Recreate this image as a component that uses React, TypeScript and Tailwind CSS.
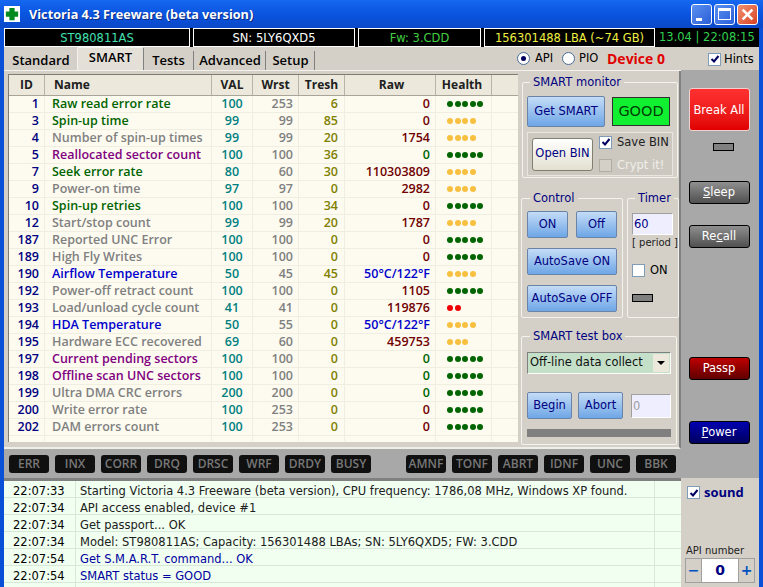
import type { ReactNode } from "react";

type Row = {
  id: number;
  name: string;
  tone: string;
  val: number;
  wrst: number;
  tresh: number;
  raw: string;
  rawTone: string;
  dots: number;
  dotTone: string;
};

const GREEN = "text-[#006400]";
const PURPLE = "text-[#800080]";
const BLUE = "text-[#0000cd]";
const GRAY = "text-[#808080]";
const MAROON = "text-[#700000]";
const OK = "bg-[#006400]";
const WARN = "bg-[#f8c040]";
const BAD = "bg-[#f00000]";

const rows: Row[] = [
  { id: 1, name: "Raw read error rate", tone: GREEN, val: 100, wrst: 253, tresh: 6, raw: "0", rawTone: MAROON, dots: 5, dotTone: OK },
  { id: 3, name: "Spin-up time", tone: GREEN, val: 99, wrst: 99, tresh: 85, raw: "0", rawTone: MAROON, dots: 4, dotTone: WARN },
  { id: 4, name: "Number of spin-up times", tone: GRAY, val: 99, wrst: 99, tresh: 20, raw: "1754", rawTone: MAROON, dots: 4, dotTone: WARN },
  { id: 5, name: "Reallocated sector count", tone: PURPLE, val: 100, wrst: 100, tresh: 36, raw: "0", rawTone: GREEN, dots: 5, dotTone: OK },
  { id: 7, name: "Seek error rate", tone: GREEN, val: 80, wrst: 60, tresh: 30, raw: "110303809", rawTone: MAROON, dots: 4, dotTone: WARN },
  { id: 9, name: "Power-on time", tone: GRAY, val: 97, wrst: 97, tresh: 0, raw: "2982", rawTone: MAROON, dots: 4, dotTone: WARN },
  { id: 10, name: "Spin-up retries", tone: GREEN, val: 100, wrst: 100, tresh: 34, raw: "0", rawTone: MAROON, dots: 5, dotTone: OK },
  { id: 12, name: "Start/stop count", tone: GRAY, val: 99, wrst: 99, tresh: 20, raw: "1787", rawTone: MAROON, dots: 4, dotTone: WARN },
  { id: 187, name: "Reported UNC Error", tone: GRAY, val: 100, wrst: 100, tresh: 0, raw: "0", rawTone: MAROON, dots: 5, dotTone: OK },
  { id: 189, name: "High Fly Writes", tone: GRAY, val: 100, wrst: 100, tresh: 0, raw: "0", rawTone: MAROON, dots: 5, dotTone: OK },
  { id: 190, name: "Airflow Temperature", tone: BLUE, val: 50, wrst: 45, tresh: 45, raw: "50°C/122°F", rawTone: BLUE, dots: 4, dotTone: WARN },
  { id: 192, name: "Power-off retract count", tone: GRAY, val: 100, wrst: 100, tresh: 0, raw: "1105", rawTone: MAROON, dots: 5, dotTone: OK },
  { id: 193, name: "Load/unload cycle count", tone: GRAY, val: 41, wrst: 41, tresh: 0, raw: "119876", rawTone: MAROON, dots: 2, dotTone: BAD },
  { id: 194, name: "HDA Temperature", tone: BLUE, val: 50, wrst: 55, tresh: 0, raw: "50°C/122°F", rawTone: BLUE, dots: 4, dotTone: WARN },
  { id: 195, name: "Hardware ECC recovered", tone: GRAY, val: 69, wrst: 60, tresh: 0, raw: "459753", rawTone: MAROON, dots: 3, dotTone: WARN },
  { id: 197, name: "Current pending sectors", tone: PURPLE, val: 100, wrst: 100, tresh: 0, raw: "0", rawTone: GREEN, dots: 5, dotTone: OK },
  { id: 198, name: "Offline scan UNC sectors", tone: PURPLE, val: 100, wrst: 100, tresh: 0, raw: "0", rawTone: GREEN, dots: 5, dotTone: OK },
  { id: 199, name: "Ultra DMA CRC errors", tone: GRAY, val: 200, wrst: 200, tresh: 0, raw: "0", rawTone: GREEN, dots: 5, dotTone: OK },
  { id: 200, name: "Write error rate", tone: GRAY, val: 100, wrst: 253, tresh: 0, raw: "0", rawTone: MAROON, dots: 5, dotTone: OK },
  { id: 202, name: "DAM errors count", tone: GRAY, val: 100, wrst: 253, tresh: 0, raw: "0", rawTone: MAROON, dots: 5, dotTone: OK },
];

const log = [
  { t: "22:07:33", m: "Starting Victoria 4.3 Freeware (beta version), CPU frequency: 1786,08 MHz, Windows XP found.", blue: false },
  { t: "22:07:34", m: "API access enabled, device #1", blue: false },
  { t: "22:07:34", m: "Get passport... OK", blue: false },
  { t: "22:07:34", m: "Model: ST980811AS; Capacity: 156301488 LBAs; SN: 5LY6QXD5; FW: 3.CDD", blue: false },
  { t: "22:07:54", m: "Get S.M.A.R.T. command... OK", blue: true },
  { t: "22:07:54", m: "SMART status = GOOD", blue: true },
];

const ledsLeft = ["ERR", "INX", "CORR", "DRQ", "DRSC", "WRF", "DRDY", "BUSY"];
const ledsRight = ["AMNF", "TONF", "ABRT", "IDNF", "UNC", "BBK"];

const columns = "grid grid-cols-[36px_167px_41px_46px_46px_91px_56px_1fr]";
const boldFont = "[font-family:'Open_Sans',sans-serif]";

const BlueBtn = ({ children, className }: { children: ReactNode; className: string }) => (
  <div className={`flex shrink-0 items-center justify-center whitespace-nowrap rounded-[2px] border border-[#6a84a8] bg-gradient-to-b from-[#c4dcf6] to-[#6ea6e6] text-[#000080] ${className}`}>
    {children}
  </div>
);

const SideBtn = ({ children, className }: { children: ReactNode; className: string }) => (
  <div className={`flex w-[61px] shrink-0 items-center justify-center rounded-[3px] border text-white ${className}`}>
    {children}
  </div>
);

const Group = ({ title, children, className }: { title: string; children: ReactNode; className: string }) => (
  <fieldset className={`shrink-0 rounded-[2px] border border-[#f4f2ec] ${className}`}>
    <legend className="ml-[3px] px-[3px] leading-[14px] text-[#000080]">{title}</legend>
    {children}
  </fieldset>
);

const Check = ({ on, faded }: { on?: boolean; faded?: boolean }) => (
  <span className={`flex h-[13px] w-[13px] shrink-0 items-center justify-center border ${faded ? "border-[#b0ac9f] bg-[#d4d0c8]" : "border-[#7f9db9] bg-white"}`}>
    {on && (
      <svg viewBox="0 0 10 10" className="h-[10px] w-[10px]">
        <path d="M1.5 5 L4 7.5 L8.5 2" fill="none" stroke="#000060" strokeWidth="2" />
      </svg>
    )}
  </span>
);

const Radio = ({ on }: { on?: boolean }) => (
  <span className="flex h-[13px] w-[13px] shrink-0 items-center justify-center rounded-full border border-[#4a6c98] bg-white">
    {on && <span className="h-[5px] w-[5px] rounded-full bg-[#000060]" />}
  </span>
);

const Led = () => <div className="h-[8px] w-[21px] border border-black bg-[#808080]" />;

const CtrlIcon = ({ children, className }: { children: ReactNode; className: string }) => (
  <div className={`flex h-[21px] w-[21px] items-center justify-center rounded-[3px] border border-white text-white ${className}`}>
    {children}
  </div>
);

const LedBox = ({ label }: { label: string }) => (
  <div className={`flex h-[18px] w-[40px] items-center justify-center rounded-[3px] bg-[#101010] text-[12px] font-semibold text-[#787878] ${boldFont}`}>{label}</div>
);

export default function App() {
  return (
    <div className="flex h-[587px] w-[763px] flex-col overflow-hidden bg-[#0a4fd8] text-[11.5px] text-black [font-family:'DejaVu_Sans',sans-serif]">
      <div className="flex h-[28px] shrink-0 items-center bg-gradient-to-b from-[#1668f0] via-[#0a54e0] to-[#0a48c8] pl-[4px] pr-[5px]">
        <div className="flex h-[16px] w-[16px] items-center justify-center bg-white">
          <svg viewBox="0 0 16 16" className="h-[14px] w-[14px]">
            <path d="M5 1h6v4h4v6h-4v4H5v-4H1V5h4z" fill="#008a20" />
          </svg>
        </div>
        <span className={`ml-[9px] mt-[2px] text-[12.7px] font-bold text-white [text-shadow:1px_1px_0_#0a2a80] ${boldFont}`}>Victoria 4.3 Freeware (beta version)</span>
        <div className="ml-auto flex gap-[2px]">
          <CtrlIcon className="items-end justify-start bg-gradient-to-br from-[#5c90f0] to-[#2a5ed8] pb-[3px] pl-[4px]">
            <span className="h-[3px] w-[6px] bg-white" />
          </CtrlIcon>
          <CtrlIcon className="bg-gradient-to-br from-[#5c90f0] to-[#2a5ed8]">
            <span className="h-[12px] w-[13px] border border-t-[3px] border-white" />
          </CtrlIcon>
          <CtrlIcon className="bg-gradient-to-br from-[#f09070] to-[#d84020]">
            <svg viewBox="0 0 12 12" className="h-[13px] w-[13px]">
              <path d="M1.5 1.5 L10.5 10.5 M10.5 1.5 L1.5 10.5" stroke="#fff" strokeWidth="2.4" />
            </svg>
          </CtrlIcon>
        </div>
      </div>

      <div className="ml-[4px] mr-[4px] flex h-[19px] shrink-0 items-stretch gap-[3px] bg-black leading-[18px]">
        <div className="w-[186px] border border-white text-center text-[#40e0b0]">ST980811AS</div>
        <div className="w-[162px] border border-white text-center text-white">SN: 5LY6QXD5</div>
        <div className="w-[123px] border border-white text-center text-[#40d040]">Fw: 3.CDD</div>
        <div className="w-[171px] border border-white text-center text-[#f0f040]">156301488 LBA (~74 GB)</div>
        <div className="ml-[1px] flex-1 whitespace-nowrap text-[#30d050]">13.04 | 22:08:15</div>
      </div>

      <div className="mx-[4px] flex h-[540px] shrink-0 flex-col bg-[#d4d0c8]">
        <div className="flex h-[23px] shrink-0 items-end pl-[1px]">
          <div className={`flex h-[19px] w-[72px] items-center justify-center text-[13px] font-semibold ${boldFont}`}>Standard</div>
          <div className={`flex h-[23px] w-[67px] items-center justify-center rounded-t-[2px] border-x border-t border-[#f4f2ec] border-r-[#808080] bg-[#e4e0d8] pb-[2px] text-[13px] font-semibold ${boldFont}`}>SMART</div>
          <div className={`flex h-[19px] w-[50px] items-center justify-center border-r border-[#808080] text-[13px] font-semibold ${boldFont}`}>Tests</div>
          <div className={`ml-[1px] flex h-[19px] w-[71px] items-center justify-center border-r border-[#808080] text-[13px] font-semibold ${boldFont}`}>Advanced</div>
          <div className={`ml-[1px] flex h-[19px] w-[48px] items-center justify-center border-r border-[#808080] text-[13px] font-semibold ${boldFont}`}>Setup</div>
          <div className="mb-[1px] flex items-center">
            <span className="ml-[202px]"><Radio on /></span>
            <span className="ml-[5px] w-[27px]">API</span>
            <Radio />
            <span className="ml-[4px] w-[28px]">PIO</span>
            <span className={`w-[101px] text-[14px] font-bold text-[#e00000] ${boldFont}`}>Device 0</span>
          </div>
          <div className="mb-[2px] flex items-center">
            <Check on />
            <span className="ml-[3px]">Hints</span>
          </div>
        </div>

        <div className="flex h-[408px] shrink-0">
          <div className="flex w-[677px] shrink-0 flex-col border-t border-[#f4f2ec]">
            <div className="flex h-[378px] shrink-0 border-b-2 border-r-2 border-b-[#f0eee8] border-r-[#808080] pl-[4px] pt-[3px]">
              <div className="flex h-[368px] w-[510px] shrink-0 flex-col border-l border-t border-[#807c70] bg-[#fdfbf0]">
                <div className={`${columns} h-[21px] shrink-0 border-b border-[#a8a498] bg-[#ece9dc] text-center text-[12px] font-bold leading-[19px] text-[#202020] ${boldFont}`}>
                  <div className="border-r border-[#b8b4a8]">ID</div>
                  <div className="border-r border-[#b8b4a8] pl-[9px] text-left">Name</div>
                  <div className="border-r border-[#b8b4a8]">VAL</div>
                  <div className="border-r border-[#b8b4a8]">Wrst</div>
                  <div className="border-r border-[#b8b4a8]">Tresh</div>
                  <div className="border-r border-[#b8b4a8] pl-[3px]">Raw</div>
                  <div className="border-r border-[#b8b4a8] pr-[3px]">Health</div>
                </div>
                {rows.map((r) => (
                  <div key={r.id} className={`${columns} h-[17px] shrink-0 border-b border-[#f0eee0] text-[12.5px] font-semibold leading-[16px] ${boldFont}`}>
                    <div className="border-r border-[#f0eee0] pr-[5px] text-right text-[#000080]">{r.id}</div>
                    <div className={`whitespace-nowrap border-r border-[#f0eee0] pl-[7px] ${r.tone}`}>{r.name}</div>
                    <div className="border-r border-[#f0eee0] text-center text-[#008080]">{r.val}</div>
                    <div className="border-r border-[#f0eee0] pr-[5px] text-right text-[#808080]">{r.wrst}</div>
                    <div className="border-r border-[#f0eee0] pr-[6px] text-right text-[#808000]">{r.tresh}</div>
                    <div className={`whitespace-nowrap border-r border-[#f0eee0] pr-[5px] text-right ${r.rawTone}`}>{r.raw}</div>
                    <div className="flex items-center gap-[1.5px] border-r border-[#f0eee0] pl-[11px]">
                      {Array.from({ length: r.dots }).map((_, i) => (
                        <span key={i} className={`h-[6px] w-[6px] shrink-0 rounded-full ${r.dotTone}`} />
                      ))}
                    </div>
                    <div />
                  </div>
                ))}
                <div className={`${columns} h-[5px] shrink-0`}>
                  <div className="border-r border-[#f0eee0]" />
                  <div className="border-r border-[#f0eee0]" />
                  <div className="border-r border-[#f0eee0]" />
                  <div className="border-r border-[#f0eee0]" />
                  <div className="border-r border-[#f0eee0]" />
                  <div className="border-r border-[#f0eee0]" />
                  <div className="border-r border-[#f0eee0]" />
                </div>
              </div>

              <div className="ml-[3px] mt-[1px] flex w-[155px] shrink-0 flex-col">
                <Group title="SMART monitor" className="ml-[1px] h-[103px] w-[154px] px-[4px] pt-[7px]">
                  <div className="flex items-center gap-[7px]">
                    <BlueBtn className="h-[31px] w-[78px]">Get SMART</BlueBtn>
                    <div className="flex h-[29px] w-[58px] items-center justify-center border border-[#303030] bg-[#10f030] text-[14.5px] text-[#004000]">GOOD</div>
                  </div>
                  <div className="mt-[5px] flex h-[44px] w-[146px] items-center gap-[6px] border border-[#e8e6de] bg-[#ccc8c0] pl-[4px]">
                    <div className="flex h-[33px] w-[61px] shrink-0 items-center justify-center whitespace-nowrap rounded-[3px] border border-[#808070] bg-gradient-to-b from-white to-[#e4e0d0] text-[#000080]">Open BIN</div>
                    <div className="flex flex-col gap-[6px]">
                      <div className="flex items-center gap-[5px] whitespace-nowrap"><Check on /><span className="text-[#202020]">Save BIN</span></div>
                      <div className="flex items-center gap-[5px] whitespace-nowrap"><Check faded /><span className="text-[#f0eee8]">Crypt it!</span></div>
                    </div>
                  </div>
                </Group>
                <div className="mt-[13px] flex gap-[4px]">
                  <Group title="Control" className="h-[127px] w-[100px] px-[5px] pt-[6px]">
                    <div className="flex justify-between">
                      <BlueBtn className="h-[27px] w-[41px]">ON</BlueBtn>
                      <BlueBtn className="h-[27px] w-[41px]">Off</BlueBtn>
                    </div>
                    <BlueBtn className="mt-[10px] h-[27px] w-[90px]">AutoSave ON</BlueBtn>
                    <BlueBtn className="mt-[10px] h-[27px] w-[90px]">AutoSave OFF</BlueBtn>
                  </Group>
                  <Group title="Timer" className="h-[127px] w-[51px] pl-[4px] pt-[8px]">
                    <div className="h-[22px] w-[41px] border border-[#a0a0a0] border-b-white border-r-white bg-[#eeeeff] pl-[1px] leading-[20px] text-[#000080]">60</div>
                    <div className="mt-[1px] whitespace-nowrap text-[10px] leading-[14px] text-[#202020]">[ period ]</div>
                    <div className="mt-[12px] flex items-center gap-[5px]"><Check /><span>ON</span></div>
                    <div className="mt-[15px]"><Led /></div>
                  </Group>
                </div>
                <Group title="SMART test box" className="mt-[11px] h-[116px] w-[155px] px-[5px] pt-[9px]">
                  <div className="flex h-[22px] w-[144px] items-center justify-between border border-[#808080] border-b-white border-r-white bg-[#c4e0c8] pl-[2px] pr-[1px] text-[#101010]">
                    <span className="whitespace-nowrap">Off-line data collect</span>
                    <span className="flex h-[18px] w-[16px] shrink-0 items-center justify-center bg-[#ece9dc]">
                      <span className="border-x-[4px] border-t-[4px] border-x-transparent border-t-black" />
                    </span>
                  </div>
                  <div className="mt-[18px] flex items-center gap-[6px]">
                    <BlueBtn className="h-[27px] w-[45px]">Begin</BlueBtn>
                    <BlueBtn className="h-[27px] w-[45px]">Abort</BlueBtn>
                    <div className="ml-[2px] h-[24px] w-[40px] border border-[#a0a0a0] border-b-white border-r-white bg-[#eeeeff] pl-[1px] leading-[22px] text-[#a0a0a0]">0</div>
                  </div>
                  <div className="mt-[10px] h-[8px] w-[144px] bg-[#808080]" />
                </Group>
              </div>
            </div>

            <div className="flex h-[29px] shrink-0 items-center justify-between bg-[#a8a8a8] pl-[5px] pr-[5px] pt-[1px]">
              <div className="flex gap-[6px]">
                {ledsLeft.map((l) => <LedBox key={l} label={l} />)}
              </div>
              <div className="flex gap-[6px]">
                {ledsRight.map((l) => <LedBox key={l} label={l} />)}
              </div>
            </div>
          </div>

          <div className="flex w-[78px] shrink-0 flex-col items-center bg-[#a8a8a8] pr-[2px] pt-[18px]">
            <SideBtn className="h-[43px] border-[#f0d0d0] bg-gradient-to-b from-[#ff3030] to-[#e00000] pt-[3px]">Break All</SideBtn>
            <div className="ml-[8px] mt-[12px]"><Led /></div>
            <SideBtn className="mt-[30px] h-[23px] border-black bg-gradient-to-b from-[#909090] to-[#505050]"><span><u>S</u>leep</span></SideBtn>
            <SideBtn className="mt-[21px] h-[23px] border-black bg-gradient-to-b from-[#909090] to-[#505050]"><span>Re<u>c</u>all</span></SideBtn>
            <SideBtn className="mt-[109px] h-[23px] border-black bg-gradient-to-b from-[#c00000] to-[#600000]">Passp</SideBtn>
            <SideBtn className="mt-[41px] h-[23px] border-black bg-gradient-to-b from-[#0000b0] to-[#000060]"><span><u>P</u>ower</span></SideBtn>
          </div>
        </div>

        <div className="flex h-[109px] shrink-0">
          <div className="w-[677px] shrink-0 overflow-hidden border-t-[3px] border-[#808080] bg-[#f0fff0]">
            {[...log, null].map((l, i) => (
              <div key={i} className="grid h-[17px] grid-cols-[72px_579px_1fr] border-b border-[#d8e8d8] leading-[20px]">
                <div className="border-r border-[#d8e8d8] pl-[9px]">{l?.t}</div>
                <div className={`whitespace-nowrap border-r border-[#d8e8d8] pl-[4px] ${l?.blue ? "text-[#0000a0]" : "text-[#202020]"}`}>{l?.m}</div>
                <div />
              </div>
            ))}
          </div>
          <div className="flex w-[78px] shrink-0 flex-col bg-[#d4d0c8] pl-[4px] pt-[5px]">
            <div className="ml-[2px] flex items-center gap-[4px]">
              <Check on />
              <span className={`text-[13px] font-bold text-[#000080] ${boldFont}`}>sound</span>
            </div>
            <div className="ml-[1px] mt-[42px] whitespace-nowrap text-[10px] leading-[12px] text-[#202020]">API number</div>
            <div className="mt-[1px] flex h-[25px] w-[70px] items-center border border-[#a0a0a0] text-[14px] font-bold text-[#0050c0]">
              <span className="flex h-full w-[15px] items-center justify-center">−</span>
              <span className="flex h-full flex-1 items-center justify-center border-x border-[#a0a0a0] bg-white text-[#000080]">0</span>
              <span className="flex h-full w-[15px] items-center justify-center">+</span>
            </div>
          </div>
        </div>
      </div>
    </div>
  );
}
